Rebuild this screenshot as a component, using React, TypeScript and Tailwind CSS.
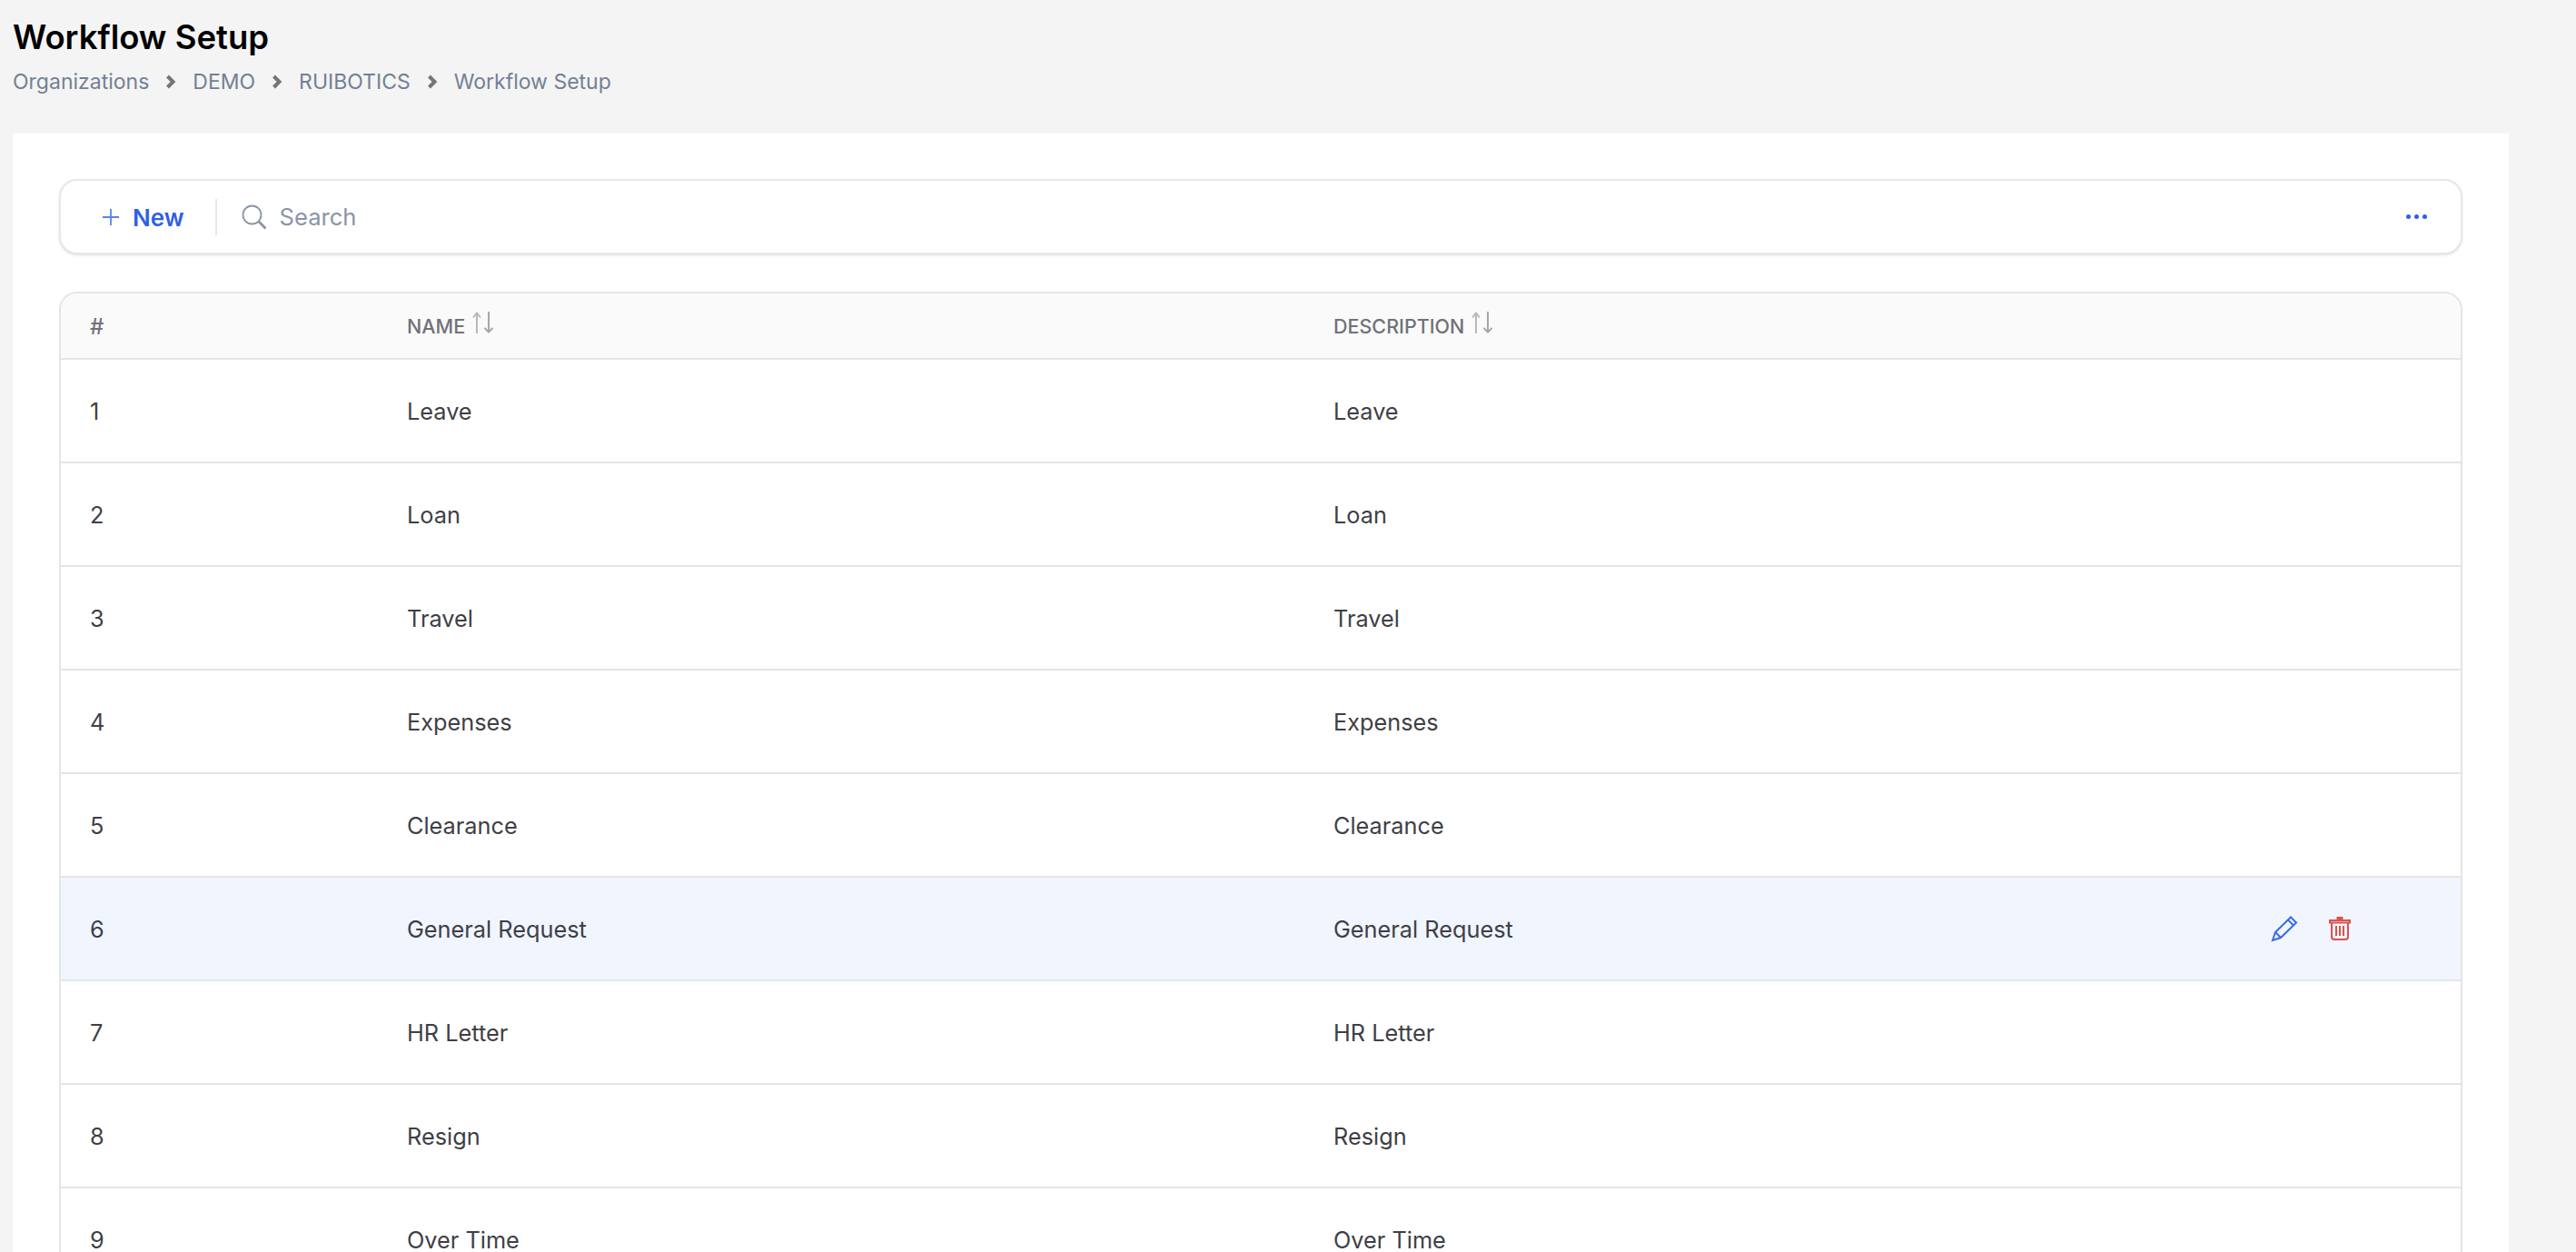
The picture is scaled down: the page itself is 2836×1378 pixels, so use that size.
import React from 'react';

const rows = [
  'Leave',
  'Loan',
  'Travel',
  'Expenses',
  'Clearance',
  'General Request',
  'HR Letter',
  'Resign',
  'Over Time',
];

const crumbs = ['Organizations', 'DEMO', 'RUIBOTICS', 'Workflow Setup'];

const Chevron = () => (
  <svg width="12" height="16" viewBox="0 0 12 16" fill="none" stroke="#757575" strokeWidth="4">
    <path d="M2.500 2 8.500 8l-6 6" />
  </svg>
);

const SortIcon = () => (
  <svg className="-translate-y-[5px]" width="24" height="24" viewBox="0 0 24 24" fill="none" strokeWidth="2">
    <path d="M5 24V1.500M1 6.500 5 1.500l4 5" stroke="#b8b8be" />
    <path d="M18 0v22.500M13.500 18l4.500 4.500 4.500-4.500" stroke="#a6a6ad" />
  </svg>
);

const PencilIcon = () => (
  <svg width="30" height="30" viewBox="0 0 30 30" fill="none" stroke="#3b6ae8" strokeWidth="2">
    <path d="M2 28 5 19 22 2.500l6 6L11 25z" />
    <path d="M5 19l6 6M19 5.500l6 6" />
  </svg>
);

const TrashIcon = () => (
  <svg width="24" height="26" viewBox="0 0 24 26" fill="none" stroke="#d9534f" strokeWidth="2">
    <path d="M1 4h22v2.500H1zM3 6.500V22a3 3 0 0 0 3 3h12a3 3 0 0 0 3-3V6.500" />
    <path d="M8.500 1.500h7" strokeWidth="3" />
    <path d="M8 10v11M12 10v11M16 10v11" />
  </svg>
);

const App = () => {
  return (
    <div className="h-screen overflow-hidden bg-[#f4f4f4] font-['Inter',sans-serif]">
      <div className="pl-[14px] pt-[19px] pb-[39px]">
        <h1 className="text-[36.5px] leading-[44px] font-semibold text-black">Workflow Setup</h1>
        <div className="mt-[9px] flex items-center text-[23px] leading-[36px] text-[#748094]">
          {crumbs.map((c, i) => (
            <React.Fragment key={c}>
              {i > 0 && (
                <span className="mx-[18px]">
                  <Chevron />
                </span>
              )}
              <span>{c}</span>
            </React.Fragment>
          ))}
        </div>
      </div>

      <div className="ml-[14px] w-[2748px] bg-white px-[51px] pt-[50px] h-[1300px]">
        <div className="flex h-[83px] items-center rounded-[20px] border-2 border-[#e5e7eb] bg-white pl-[45px] pr-[37px] shadow-sm">
          <button className="flex items-center gap-[14px] pt-[1px] text-[26px] font-semibold text-[#2f5fe6]">
            <svg width="20" height="20" viewBox="0 0 20 20" fill="none" stroke="#5b82ec" strokeWidth="1.800">
              <path d="M10 1v18M1 10h18" />
            </svg>
            New
          </button>
          <div className="ml-[34px] mr-[27px] h-[40px] w-[2px] bg-[#e5e7eb]" />
          <svg width="28" height="28" viewBox="0 0 28 28" fill="none" stroke="#8a94a6" strokeWidth="1.800">
            <circle cx="11.500" cy="11.500" r="10" />
            <path d="M19 19l7.500 7.500" strokeWidth="2.800" />
          </svg>
          <span className="ml-[14px] pt-[1px] text-[25.6px] text-[#8a94a6]">Search</span>
          <div className="ml-auto flex gap-[4px]">
            <span className="h-[5px] w-[5px] rounded-full bg-[#2f5fe6]" />
            <span className="h-[5px] w-[5px] rounded-full bg-[#2f5fe6]" />
            <span className="h-[5px] w-[5px] rounded-full bg-[#2f5fe6]" />
          </div>
        </div>

        <div className="mt-[41px] overflow-hidden rounded-[20px] border-2 border-[#e5e5e5]">
          <table className="w-full table-fixed border-collapse text-[25.3px] text-[#3f3f46]">
            <thead>
              <tr className="h-[72px] border-b-2 border-[#e5e5e5] bg-[#fafafa] text-left">
                <th className="w-[381px] pl-[32px] pt-[2px] text-[24px] font-medium text-[#71717a]">#</th>
                <th className="w-[1020px] pt-[2px] text-[21.5px] font-medium text-[#71717a]">
                  <span className="inline-flex items-center gap-[8px]">
                    NAME
                    <SortIcon />
                  </span>
                </th>
                <th className="pt-[2px] text-[21.5px] font-medium text-[#71717a]">
                  <span className="inline-flex items-center gap-[8px]">
                    DESCRIPTION
                    <SortIcon />
                  </span>
                </th>
                <th className="w-[300px]" />
              </tr>
            </thead>
            <tbody>
              {rows.map((name, i) => {
                const active = name === 'General Request';
                return (
                  <tr key={name} className={`h-[114px] border-b-2 border-[#e5e5e5] ${active ? 'bg-[#f0f5fe]' : ''}`}>
                    <td className="pl-[32px] pt-[2px]">{i + 1}</td>
                    <td className="pt-[2px]">{name}</td>
                    <td className="pt-[2px]">{name}</td>
                    <td>
                      {active && (
                        <div className="flex items-center gap-[34px] pl-[91px]">
                          <PencilIcon />
                          <TrashIcon />
                        </div>
                      )}
                    </td>
                  </tr>
                );
              })}
            </tbody>
          </table>
        </div>
      </div>
    </div>
  );
};

export default App;
